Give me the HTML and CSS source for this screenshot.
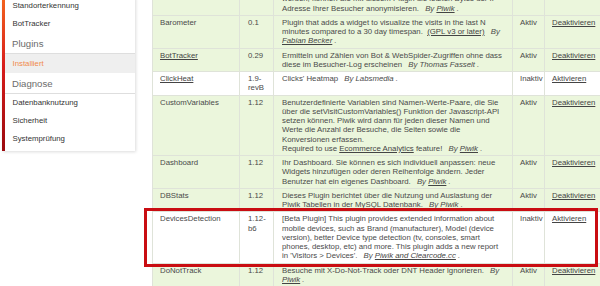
FILE: index.html
```html
<!DOCTYPE html>
<html>

<head>
    <meta charset="utf-8" />
    <title>Plugins - Installiert</title>
    <link rel="stylesheet" href="styles.css">
</head>

<body>
    <div class="page">
        <aside class="sidebar">
            <ul class="menu">
                <li><a href="#">Standorterkennung</a></li>
                <li><a href="#">BotTracker</a></li>
                <li class="head">Plugins</li>
                <li class="active"><a href="#">Installiert</a></li>
                <li class="head">Diagnose</li>
                <li><a href="#">Datenbanknutzung</a></li>
                <li><a href="#">Sicherheit</a></li>
                <li><a href="#">Systemprüfung</a></li>
            </ul>
        </aside>

        <div class="content">
            <table class="plugins">
                <colgroup>
                    <col class="c-name">
                    <col class="c-ver">
                    <col class="c-desc">
                    <col class="c-status">
                    <col class="c-action">
                </colgroup>
                <tr class="on">
                    <td>AnonymizeIP</td>
                    <td>1.12</td>
                    <td>Um den Datenschutzrichtlinien in Ihrem Land gerecht zu<br>werden, können Sie mit diesem Plugin die letzten Bytes der IP -<br>Adresse Ihrer Besucher anonymisieren. <span class="by">By <a href="#">Piwik</a> .</span></td>
                    <td>Aktiv</td>
                    <td><a href="#">Deaktivieren</a></td>
                </tr>
                <tr class="on">
                    <td>Barometer</td>
                    <td>0.1</td>
                    <td>Plugin that adds a widget to visualize the visits in the last N<br>minutes compared to a 30 day timespan. &nbsp;<a href="#">(GPL v3 or later)</a> <span class="by">By<br><a href="#">Fabian Becker</a> .</span></td>
                    <td>Aktiv</td>
                    <td><a href="#">Deaktivieren</a></td>
                </tr>
                <tr class="on">
                    <td><a href="#">BotTracker</a></td>
                    <td>0.29</td>
                    <td>Ermitteln und Zählen von Bot &amp; WebSpider-Zugriffen ohne dass<br>diese im Besucher-Log erscheinen <span class="by">By Thomas Fasselt .</span></td>
                    <td>Aktiv</td>
                    <td><a href="#">Deaktivieren</a></td>
                </tr>
                <tr class="off">
                    <td><a href="#">ClickHeat</a></td>
                    <td>1.9-<br>revB</td>
                    <td>Clicks' Heatmap <span class="by">By Labsmedia .</span></td>
                    <td>Inaktiv</td>
                    <td><a href="#">Aktivieren</a></td>
                </tr>
                <tr class="on">
                    <td>CustomVariables</td>
                    <td>1.12</td>
                    <td>Benutzerdefinierte Variablen sind Namen-Werte-Paare, die Sie<br>über die setVisitCustomVariables() Funktion der Javascript-API<br>setzen können. Piwik wird dann für jeden dieser Namen und<br>Werte die Anzahl der Besuche, die Seiten sowie die<br>Konversionen erfassen.<br>Required to use <a href="#">Ecommerce Analytics</a> feature! <span class="by">By <a href="#">Piwik</a> .</span></td>
                    <td>Aktiv</td>
                    <td><a href="#">Deaktivieren</a></td>
                </tr>
                <tr class="on">
                    <td>Dashboard</td>
                    <td>1.12</td>
                    <td>Ihr Dashboard. Sie können es sich individuell anpassen: neue<br>Widgets hinzufügen oder deren Reihenfolge ändern. Jeder<br>Benutzer hat ein eigenes Dashboard. <span class="by">By <a href="#">Piwik</a> .</span></td>
                    <td>Aktiv</td>
                    <td><a href="#">Deaktivieren</a></td>
                </tr>
                <tr class="on">
                    <td>DBStats</td>
                    <td>1.12</td>
                    <td>Dieses Plugin berichtet über die Nutzung und Auslastung der<br>Piwik Tabellen in der MySQL Datenbank. <span class="by">By <a href="#">Piwik</a> .</span></td>
                    <td>Aktiv</td>
                    <td><a href="#">Deaktivieren</a></td>
                </tr>
                <tr class="off">
                    <td>DevicesDetection</td>
                    <td>1.12-<br>b6</td>
                    <td>[Beta Plugin] This plugin provides extended information about<br>mobile devices, such as Brand (manufacturer), Model (device<br>version), better Device type detection (tv, consoles, smart<br>phones, desktop, etc) and more. This plugin adds a new report<br>in 'Visitors &gt; Devices'. <span class="by">By <a href="#">Piwik and Clearcode.cc</a> .</span></td>
                    <td>Inaktiv</td>
                    <td><a href="#">Aktivieren</a></td>
                </tr>
                <tr class="on">
                    <td>DoNotTrack</td>
                    <td>1.12</td>
                    <td>Besuche mit X-Do-Not-Track oder DNT Header ignorieren. <span class="by">By<br><a href="#">Piwik</a> .</span></td>
                    <td>Aktiv</td>
                    <td><a href="#">Deaktivieren</a></td>
                </tr>
            </table>
            <!-- red annotation box around DevicesDetection -->
            <div class="mark"></div>
        </div>
    </div>
</body>

</html>
```

FILE: styles.css
```css
html,
body {
    margin: 0;
    padding: 0;
    background: #fff;
    overflow: hidden;
    font-family: "Liberation Sans", Arial, sans-serif;
}

.page {
    display: flex;
    align-items: flex-start;
    gap: 17px;
    margin-top: -18px;
    padding-left: 2px;
}

/* left menu */
.sidebar {
    flex: 0 0 130px;
    margin-top: 15px;
    padding-bottom: 3px;
    background: #fff;
    border-left: 3px solid #c8141c;
    border-image: linear-gradient(to bottom, #f4661e 0%, #d81d1b 45%, #9a0a0e 100%) 1;
    box-shadow: 1px 1px 3px rgba(0, 0, 0, 0.14);
}

.menu {
    list-style: none;
    margin: 0;
    padding: 0;
}

.menu li {
    height: 18px;
    line-height: 18px;
    font-size: 7.8px;
}

.menu li a {
    display: block;
    padding-left: 7.5px;
    color: #333;
    text-decoration: none;
}

.menu li.head {
    height: 20px;
    line-height: 21px;
    padding-left: 7px;
    font-size: 9.6px;
    color: #6c6c6c;
    border-bottom: 1px solid #dedede;
}

.menu li.active {
    background: #efefef;
    height: 19px;
    line-height: 19px;
}

.menu li.active a {
    color: #ef8a4c;
}

/* plugin table */
.content {
    position: relative;
    flex: 0 0 470px;
}

.plugins {
    border-collapse: collapse;
    table-layout: fixed;
    width: 470px;
    font-size: 7.8px;
    line-height: 9.25px;
    color: #4a4a4a;
}

.c-name {
    width: 87px;
}

.c-ver {
    width: 34px;
}

.c-desc {
    width: 239px;
}

.c-status {
    width: 32px;
}

.c-action {
    width: 78px;
}

.plugins td {
    vertical-align: top;
    padding: 2px 7px 2px 7px;
    border: 1px solid #dfe3d9;
    white-space: nowrap;
    overflow: hidden;
}

.plugins td:nth-child(2),
.plugins td:nth-child(3) {
    padding-left: 8px;
}

.plugins tr.on td {
    background: #ebf6dc;
}

.plugins tr.off td {
    background: #fff;
}

.plugins a {
    color: #444;
    text-decoration: underline;
}

.by {
    margin-left: 4px;
    font-style: italic;
}

.mark {
    position: absolute;
    left: -8px;
    top: 226px;
    width: 454px;
    height: 59px;
    box-sizing: border-box;
    border: 3px solid #c90d12;
}
```
